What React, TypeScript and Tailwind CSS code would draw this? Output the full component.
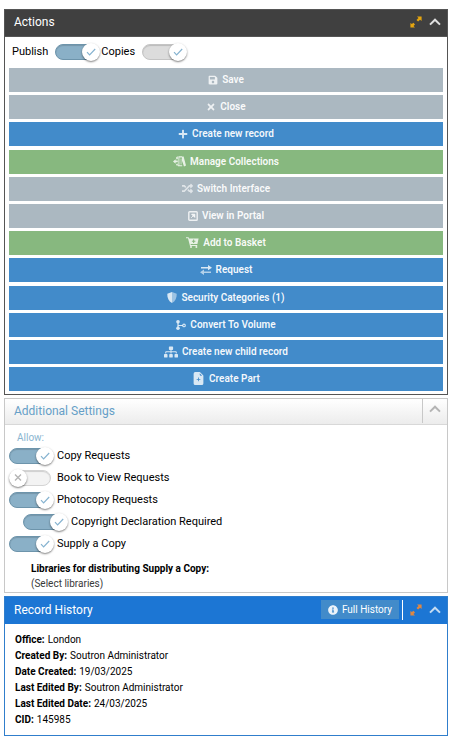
import React, { useState } from 'react';
import { FaPlus, FaSave, FaSitemap, FaTimes, FaRandom, FaInfoCircle } from 'react-icons/fa';
import { BsFileEarmarkPlusFill } from 'react-icons/bs';

const BooksIcon = () => (
  <svg viewBox="0 0 13 11" className="w-[13px] h-[11px]" fill="currentColor">
    <path d="M0 5.4 2.6 3.2v1.4h2.2v1.7H2.6v1.4z" />
    <path d="M3 1.2 5 .2v3H3zM5 7.4v2.4l-2-.6V8z" opacity="0.8" />
    <path d="M5.4.2h3.8v1.4H5.4zM5.4 1.6h1v7.6h-1zM5 9.2h4.2v1H5z" />
    <path d="M9 .8 10.6.4l2.4 9.2-2 .8-2-5.6z" />
    <path d="M7.2 2.4H9v6H7.2z" opacity="0.4" />
  </svg>
);

const PortalIcon = () => (
  <svg viewBox="0 0 10 10" className="w-[10px] h-[10px]" fill="none" stroke="currentColor">
    <rect x="0.8" y="0.8" width="8.4" height="8.4" rx="0.8" strokeWidth="1.4" />
    <path d="M3.6 3.2h3.2v3.2zM3.2 6.8 5.4 4.6" fill="currentColor" strokeWidth="1" />
  </svg>
);

const BasketIcon = () => (
  <svg viewBox="0 0 13 11" className="w-[13px] h-[11px]" fill="currentColor">
    <path fillRule="evenodd" d="M0 .3h2.6l.4 1.2h9.6L11.4 7H4.6l.2.9h6.4v1H4L2 1.3H0zM7.1 2.5v1.2H5.9v1h1.2v1.2h1.1V4.7h1.2v-1H8.2V2.5z" />
    <circle cx="5" cy="10" r="1" />
    <circle cx="10.4" cy="10" r="1" />
  </svg>
);

const TransferIcon = () => (
  <svg viewBox="0 0 12 10" className="w-[12px] h-[10px]" fill="currentColor">
    <path d="M1 1.9h7V0L12 2.7 8 5.3V3.4H1z" />
    <path d="M11 6.4H4V4.6L0 7.3 4 10V8h7z" opacity="0.75" />
  </svg>
);

const ShieldIcon = () => (
  <svg viewBox="0 0 10 11" className="w-[10px] h-[11px]" fill="currentColor">
    <path d="M5 0 .3 1.8C.2 6 1.6 9.3 5 11z" />
    <path d="m5 0 4.7 1.8C9.8 6 8.4 9.3 5 11z" opacity="0.6" />
  </svg>
);

const ForkIcon = () => (
  <svg viewBox="0 0 10 10" className="w-[10px] h-[10px]" fill="currentColor">
    <circle cx="2" cy="1.8" r="1.8" />
    <circle cx="2" cy="8.2" r="1.8" />
    <circle cx="8" cy="5.4" r="1.3" fill="none" stroke="currentColor" strokeWidth="1.1" />
    <path d="M1.4 3h1.2v4H1.4zM2 4.9h4.8v1H2z" />
  </svg>
);

const ExpandIcon = () => (
  <svg viewBox="0 0 12 12" className="w-3 h-3" fill="currentColor">
    <path d="M7 .4h4.6V5l-1.5-1.3-2 1.9L6.5 4l2-2zM.4 7l1.5 1.1L3.4 6.8 5 8.4l-1.5 1.7L5 11.6H.4z" />
  </svg>
);

const ChevronIcon = () => (
  <svg viewBox="0 0 12 8" className="w-3 h-2" fill="none" stroke="currentColor" strokeWidth="2">
    <path d="M1 6.6 6 1.7l5 4.9" />
  </svg>
);

interface ToggleProps {
  label: string;
  defaultChecked?: boolean;
  disabled?: boolean;
  labelFirst?: boolean;
}

const Toggle: React.FC<ToggleProps> = ({ label, defaultChecked = false, disabled = false, labelFirst = false }) => {
  const [checked, setChecked] = useState(defaultChecked);
  const track = disabled
    ? 'border-[#c4c4c4] bg-[#dcdcdc]'
    : checked
      ? 'border-[#6d94ab] bg-[#8ab0c7]'
      : 'border-[#d4d4d4] bg-[#f3f3f3]';

  return (
    <label className="flex h-[22px] items-center text-[11px] text-black">
      {labelFirst && <span className="mr-[7px]">{label}</span>}
      <span className="relative flex h-[18px] w-[46px] items-center">
        <input
          type="checkbox"
          checked={checked}
          disabled={disabled}
          onChange={(e) => setChecked(e.target.checked)}
          className={`h-4 w-[42px] appearance-none rounded-full border shadow-[inset_0_1px_1px_rgba(0,0,0,0.15)] ${track}`}
        />
        <span
          className={`pointer-events-none absolute top-0 flex h-[18px] w-[18px] items-center justify-center rounded-full bg-white shadow-[0_1px_2px_rgba(0,0,0,0.5)] ${checked ? 'right-[1px]' : 'left-0'}`}
        >
          <svg viewBox="0 0 10 10" className="h-[10px] w-[10px]" fill="none" strokeWidth="1.2">
            {checked ? (
              <path d="M1 5.2 3.6 7.8 9.2 2" stroke="#86b3d0" />
            ) : (
              <path d="m2 1.6 6 6M8 1.6l-6 6" stroke="#b4b4b4" strokeWidth="1.4" />
            )}
          </svg>
        </span>
      </span>
      {!labelFirst && <span className="ml-[2px]">{label}</span>}
    </label>
  );
};

const actionGroups = [
  [
    { label: 'Save', icon: <FaSave size={10} />, color: 'bg-[#abb8c1]' },
    { label: 'Close', icon: <FaTimes size={10} />, color: 'bg-[#abb8c1]' },
    { label: 'Create new record', icon: <FaPlus size={10} />, color: 'bg-[#428bca]' },
  ],
  [
    { label: 'Manage Collections', icon: <BooksIcon />, color: 'bg-[#87b87f]' },
    { label: 'Switch Interface', icon: <FaRandom size={11} className="opacity-80" />, color: 'bg-[#abb8c1]' },
    { label: 'View in Portal', icon: <PortalIcon />, color: 'bg-[#abb8c1]' },
    { label: 'Add to Basket', icon: <BasketIcon />, color: 'bg-[#87b87f]' },
    { label: 'Request', icon: <TransferIcon />, color: 'bg-[#428bca]' },
  ],
  [
    { label: 'Security Categories (1)', icon: <ShieldIcon />, color: 'bg-[#428bca]' },
    { label: 'Convert To Volume', icon: <ForkIcon />, color: 'bg-[#428bca]' },
    { label: 'Create new child record', icon: <FaSitemap size={14} />, color: 'bg-[#428bca]' },
    { label: 'Create Part', icon: <BsFileEarmarkPlusFill size={13} />, color: 'bg-[#428bca]' },
  ],
];

const history = [
  ['Office', 'London'],
  ['Created By', 'Soutron Administrator'],
  ['Date Created', '19/03/2025'],
  ['Last Edited By', 'Soutron Administrator'],
  ['Last Edited Date', '24/03/2025'],
  ['CID', '145985'],
];

const App: React.FC = () => {
  return (
    <main className="flex flex-col gap-[3px] bg-white pt-[9px] pr-[2px] pl-1 font-[Roboto,'Liberation_Sans',sans-serif] text-black">
      <section className="border border-[#555555]">
        <header className="flex h-[27px] items-center border-b border-[#555555] bg-[#404040] pr-[6px] pb-[2px] pl-[9px] text-white">
          <h2 className="flex-1 text-[12px]">Actions</h2>
          <button aria-label="Expand actions" className="mr-[7px] text-[#e5a50f]"><ExpandIcon /></button>
          <button aria-label="Collapse actions" className="text-[#e0e0e0]"><ChevronIcon /></button>
        </header>
        <div className="flex items-center px-[7px] pt-1 pb-[5px]">
          <Toggle label="Publish" defaultChecked labelFirst />
          <Toggle label="Copies" defaultChecked disabled labelFirst />
        </div>
        <div className="flex flex-col gap-1 px-1 pb-[3px]">
          {actionGroups.map((group, i) => (
            <div key={i} className="flex flex-col gap-[3px]">
              {group.map((action) => (
                <button
                  key={action.label}
                  className={`flex h-6 items-center justify-center gap-1 pb-px text-[10px] font-semibold text-white/95 ${action.color}`}
                >
                  <span className="flex text-white/80">{action.icon}</span>
                  {action.label}
                </button>
              ))}
            </div>
          ))}
        </div>
      </section>

      <section className="border border-[#c8c8c8]">
        <header className="flex h-[26px] items-center border-b border-[#d8d8d8] bg-linear-to-b from-white to-[#ececec] pb-px pl-[9px]">
          <h2 className="flex-1 text-[12px] text-[#669fc7]">Additional Settings</h2>
          <button
            aria-label="Collapse additional settings"
            className="flex h-6 w-[25px] items-center justify-center border-l border-[#c8c8c8] pb-1 text-[#b4b4b4]"
          >
            <ChevronIcon />
          </button>
        </header>
        <div className="px-1 pt-[5px] pb-px">
          <p className="pl-2 text-[10px] leading-[15px] text-[#8ab5d0]">Allow:</p>
          <Toggle label="Copy Requests" defaultChecked />
          <Toggle label="Book to View Requests" />
          <Toggle label="Photocopy Requests" defaultChecked />
          <div className="pl-[14px]">
            <Toggle label="Copyright Declaration Required" defaultChecked />
          </div>
          <Toggle label="Supply a Copy" defaultChecked />
          <div className="pt-[6px] pl-[22px] text-[10px] leading-[15px]">
            <p className="font-bold">Libraries for distributing Supply a Copy:</p>
            <p className="text-[#393939]">(Select libraries)</p>
          </div>
        </div>
      </section>

      <section className="border border-[#307ecc]">
        <header className="flex h-[27px] items-center bg-[#1c76d4] pr-[6px] pb-[2px] pl-[9px] text-white">
          <h2 className="flex-1 text-[12px]">Record History</h2>
          <button className="flex h-[19px] items-center gap-1 bg-[#428bca] px-[7px] text-[10px]">
            <FaInfoCircle size={10} className="text-white/90" />
            Full History
          </button>
          <span className="mr-[7px] ml-[3px] h-5 w-px bg-white" />
          <button aria-label="Expand history" className="mr-[7px] text-[#de8743]"><ExpandIcon /></button>
          <button aria-label="Collapse history" className="text-[#c5dcf2]"><ChevronIcon /></button>
        </header>
        <dl className="px-[10px] pt-2 pb-[7px] text-[10px] leading-4">
          {history.map(([name, value]) => (
            <div key={name} className="flex gap-[3px]">
              <dt className="font-bold">{name}:</dt>
              <dd>{value}</dd>
            </div>
          ))}
        </dl>
      </section>
    </main>
  );
};

export default App;
